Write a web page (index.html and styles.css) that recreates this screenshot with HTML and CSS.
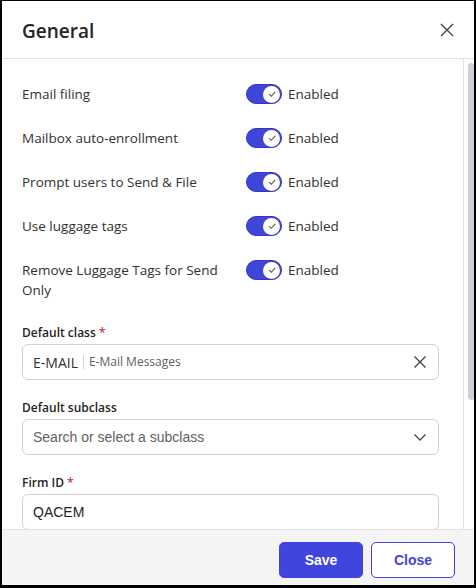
FILE: index.html
```html
<!DOCTYPE html>
<html lang="en">
<head>
    <meta charset="UTF-8">
    <meta name="viewport" content="width=device-width, initial-scale=1.0">
    <title>General Settings</title>
    <link rel="stylesheet" href="styles.css">
</head>
<body>
    <div class="dialog">
        <!-- Header -->
        <div class="dialog-header">
            <h1>General</h1>
            <button class="icon-button" aria-label="Close">
                <svg width="14" height="14" viewBox="0 0 14 14"><path d="M1 1 L13 13 M13 1 L1 13" stroke="#444" stroke-width="1.4" fill="none"/></svg>
            </button>
        </div>

        <!-- Body with scrollbar -->
        <div class="dialog-main">
            <div class="dialog-body">
                <div class="setting-row">
                    <div class="setting-label">Email filing</div>
                    <div class="setting-value"><span class="toggle"><span class="knob"><svg width="10" height="10" viewBox="0 0 10 10"><path d="M2 5.2 L4.2 7.3 L8.2 2.8" stroke="#555" stroke-width="1.1" fill="none"/></svg></span></span>Enabled</div>
                </div>
                <div class="setting-row">
                    <div class="setting-label">Mailbox auto-enrollment</div>
                    <div class="setting-value"><span class="toggle"><span class="knob"><svg width="10" height="10" viewBox="0 0 10 10"><path d="M2 5.2 L4.2 7.3 L8.2 2.8" stroke="#555" stroke-width="1.1" fill="none"/></svg></span></span>Enabled</div>
                </div>
                <div class="setting-row">
                    <div class="setting-label">Prompt users to Send &amp; File</div>
                    <div class="setting-value"><span class="toggle"><span class="knob"><svg width="10" height="10" viewBox="0 0 10 10"><path d="M2 5.2 L4.2 7.3 L8.2 2.8" stroke="#555" stroke-width="1.1" fill="none"/></svg></span></span>Enabled</div>
                </div>
                <div class="setting-row">
                    <div class="setting-label">Use luggage tags</div>
                    <div class="setting-value"><span class="toggle"><span class="knob"><svg width="10" height="10" viewBox="0 0 10 10"><path d="M2 5.2 L4.2 7.3 L8.2 2.8" stroke="#555" stroke-width="1.1" fill="none"/></svg></span></span>Enabled</div>
                </div>
                <div class="setting-row">
                    <div class="setting-label">Remove Luggage Tags for Send Only</div>
                    <div class="setting-value"><span class="toggle"><span class="knob"><svg width="10" height="10" viewBox="0 0 10 10"><path d="M2 5.2 L4.2 7.3 L8.2 2.8" stroke="#555" stroke-width="1.1" fill="none"/></svg></span></span>Enabled</div>
                </div>

                <div class="field">
                    <label class="field-label">Default class <span class="required">*</span></label>
                    <div class="input-box">
                        <span class="class-code">E-MAIL</span>
                        <span class="class-name">E-Mail Messages</span>
                        <svg class="input-icon" width="14" height="14" viewBox="0 0 14 14"><path d="M1.5 1.5 L12.5 12.5 M12.5 1.5 L1.5 12.5" stroke="#444" stroke-width="1.4" fill="none"/></svg>
                    </div>
                </div>

                <div class="field">
                    <label class="field-label">Default subclass</label>
                    <div class="input-box">
                        <span class="placeholder">Search or select a subclass</span>
                        <svg class="input-icon" width="14" height="14" viewBox="0 0 14 14"><path d="M1.5 4.5 L7 10 L12.5 4.5" stroke="#444" stroke-width="1.3" fill="none"/></svg>
                    </div>
                </div>

                <div class="field">
                    <label class="field-label">Firm ID <span class="required">*</span></label>
                    <div class="input-box">
                        <span class="input-text">QACEM</span>
                    </div>
                </div>
            </div>

            <div class="scrollbar">
                <div class="scroll-thumb"></div>
            </div>
        </div>

        <!-- Footer -->
        <div class="dialog-footer">
            <button class="btn btn-primary">Save</button>
            <button class="btn btn-secondary">Close</button>
        </div>
    </div>
</body>
</html>
```

FILE: styles.css
```css
/* Reset and base styles */
* {
    margin: 0;
    padding: 0;
    box-sizing: border-box;
}

body {
    font-family: 'Open Sans', 'Noto Sans', sans-serif;
    background: #000;
    color: #323130;
    height: 588px;
    overflow: hidden;
}

.dialog {
    margin: 1px 2px 0 2px;
    width: 472px;
    height: 584px;
    background: white;
    display: flex;
    flex-direction: column;
    overflow: hidden;
}

/* Header */
.dialog-header {
    height: 58px;
    flex-shrink: 0;
    display: flex;
    align-items: center;
    justify-content: space-between;
    padding: 0 17px 0 20px;
    border-bottom: 1px solid #e1e1e1;
}

.dialog-header h1 {
    font-size: 19px;
    font-weight: 600;
    color: #252423;
    padding-top: 2px;
}

.icon-button {
    background: none;
    border: none;
    width: 20px;
    height: 20px;
    display: flex;
    align-items: center;
    justify-content: center;
    cursor: pointer;
}

/* Body */
.dialog-main {
    flex: 1;
    display: flex;
    min-height: 0;
}

.dialog-body {
    flex: 1;
    overflow: hidden;
    padding: 13px 24px 0 20px;
}

.scrollbar {
    width: 11px;
    flex-shrink: 0;
    border-left: 1px solid #e1e1e1;
    padding: 4px 0 0 4px;
}

.scroll-thumb {
    height: 337px;
    background: #cdd0d4;
    border-radius: 4px 3px 3px 4px;
}

.setting-row {
    display: grid;
    grid-template-columns: 224px 1fr;
    padding: 12px 0;
    font-size: 13.5px;
    line-height: 20px;
}

.setting-label {
    padding-right: 12px;
}

.setting-value {
    display: flex;
    align-items: flex-start;
    gap: 6px;
}

.toggle {
    width: 36px;
    height: 20px;
    border-radius: 10px;
    background: #3f45d6;
    border: 1px solid #3338b8;
    display: flex;
    align-items: center;
    justify-content: flex-end;
    padding-right: 1px;
}

.knob {
    width: 17px;
    height: 17px;
    border-radius: 50%;
    background: white;
    display: flex;
    align-items: center;
    justify-content: center;
}

/* Fields */
.field {
    margin-top: 13px;
    margin-bottom: 20px;
}

.field-label {
    display: block;
    font-size: 12px;
    font-weight: 600;
    line-height: 16px;
    margin-bottom: 3px;
    color: #252423;
}

.required {
    color: #d13438;
}

.input-box {
    height: 36px;
    border: 1px solid #d1d1d1;
    border-radius: 6px;
    display: flex;
    align-items: center;
    padding: 0 11px 0 10px;
}

.class-code {
    font-size: 14px;
}

.class-name {
    font-size: 12px;
    color: #616161;
    margin-left: 5px;
    padding-left: 5px;
    border-left: 1px solid #d1d1d1;
    line-height: 14px;
}

.placeholder,
.input-text {
    font-family: 'Liberation Sans', Arial, sans-serif;
    font-size: 14px;
}

.placeholder {
    color: #616161;
}

.input-text {
    color: #242424;
}

.input-icon {
    margin-left: auto;
}

/* Footer */
.dialog-footer {
    flex-shrink: 0;
    height: 56px;
    background: #f4f4f4;
    border-top: 1px solid #e1e1e1;
    display: flex;
    justify-content: flex-end;
    align-items: flex-start;
    gap: 8px;
    padding: 12px 19px 0 0;
}

.btn {
    width: 84px;
    height: 36px;
    border-radius: 5px;
    font-family: 'Liberation Sans', Arial, sans-serif;
    font-size: 14px;
    font-weight: bold;
    cursor: pointer;
}

.btn-primary {
    background: #3f45dd;
    color: white;
    border: 1px solid #3f45dd;
}

.btn-secondary {
    background: white;
    color: #3f45dd;
    border: 1.5px solid #3f45dd;
}
```
